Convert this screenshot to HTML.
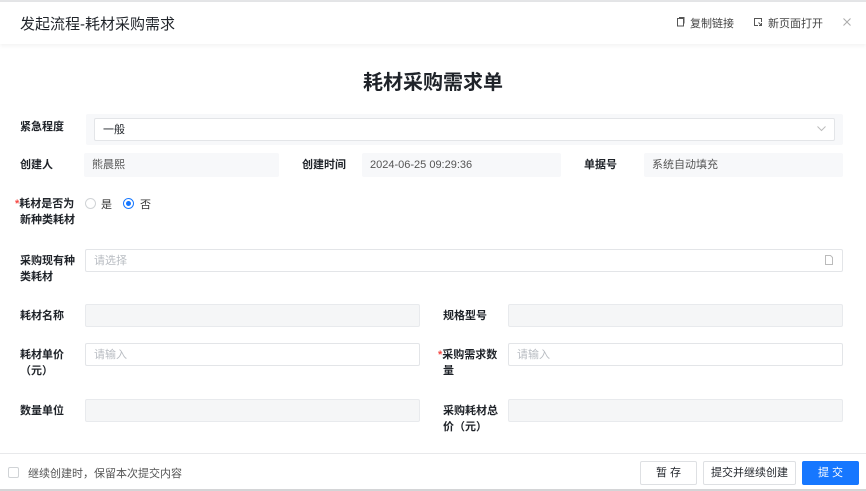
<!DOCTYPE html>
<html><head><meta charset="utf-8"><style>
*{box-sizing:border-box;margin:0;padding:0}
body{width:866px;height:491px;overflow:hidden;background:#fff;font-family:"Liberation Sans","Noto Sans CJK SC",sans-serif;color:#1f2329;position:relative}
.a{position:absolute;white-space:nowrap}
.lbl{font-size:11px;font-weight:bold;color:#1f2329;line-height:16px}
.f{position:absolute;height:23px;border-radius:2px}
.g{background:#f5f6f7;border:1px solid #e8eaed}
.w{background:#fff;border:1px solid #e3e5e8}
.ro{background:#f7f8fa}
.ph{font-size:11px;color:#b8bcc2;line-height:23px;padding-left:8px}
.req{color:#f54a45}
.btn{position:absolute;top:461px;height:24px;font-size:11px;line-height:22px;text-align:center;border:1px solid #dee0e3;border-radius:2px;background:#fff;color:#1f2329}
</style></head><body>
<div class="a" style="left:0;top:0;width:866px;height:2px;background:#e4e5e7"></div>
<div class="a" style="left:0;top:2px;width:866px;height:42px;background:#fff;box-shadow:0 2px 4px rgba(0,0,0,0.05)"></div>
<div class="a" style="left:20px;top:13px;font-size:15px;color:#1f2329">发起流程-耗材采购需求</div>
<svg class="a" style="left:676px;top:17px" width="9" height="10" viewBox="0 0 9 10"><rect x="1.5" y="1.5" width="6" height="7.5" fill="none" stroke="#555" stroke-width="1"/><path d="M3 0.5h5v6" fill="none" stroke="#555"/></svg>
<div class="a" style="left:690px;top:15px;font-size:11px;color:#444">复制链接</div>
<svg class="a" style="left:753px;top:17px" width="10" height="10" viewBox="0 0 10 10"><path d="M8.5 5V1.5h-7v7H5M5.5 5.5l3 3M6 8.5h2.5V6" fill="none" stroke="#555"/></svg>
<div class="a" style="left:768px;top:15px;font-size:11px;color:#444">新页面打开</div>
<svg class="a" style="left:843px;top:18px" width="8" height="8" viewBox="0 0 8 8"><path d="M0.5 0.5l7 7M7.5 0.5l-7 7" stroke="#aaa"/></svg>

<div class="a" style="left:0;width:866px;top:66px;text-align:center;font-size:20px;font-weight:bold;color:#1f2329">耗材采购需求单</div>

<div class="a lbl" style="left:20px;top:119px">紧急程度</div>
<div class="f" style="left:86px;top:114px;width:757px;height:31px;background:#f7f8fa"></div>
<div class="f w" style="left:94px;top:118px;width:741px;height:23px;font-size:11px;line-height:23px;padding-left:8px">一般</div>
<svg class="a" style="left:817px;top:126px" width="9" height="6" viewBox="0 0 9 6"><path d="M0.5 0.5l4 4 4-4" fill="none" stroke="#bbb"/></svg>

<div class="a lbl" style="left:20px;top:157px">创建人</div>
<div class="f ro" style="left:84px;top:153px;width:195px;height:24px;font-size:11px;line-height:25px;padding-left:8px;color:#555">熊晨熙</div>
<div class="a lbl" style="left:302px;top:157px">创建时间</div>
<div class="f ro" style="left:362px;top:153px;width:199px;height:24px;font-size:11px;line-height:25px;padding-left:8px;color:#555">2024-06-25 09:29:36</div>
<div class="a lbl" style="left:584px;top:157px">单据号</div>
<div class="f ro" style="left:644px;top:153px;width:199px;height:24px;font-size:11px;line-height:25px;padding-left:8px;color:#555">系统自动填充</div>

<div class="a lbl" style="left:15px;top:196px"><span class="req">*</span>耗材是否为</div>
<div class="a lbl" style="left:20px;top:212px">新种类耗材</div>
<div class="a" style="left:85px;top:198px;width:11px;height:11px;border:1px solid #d0d3d6;border-radius:50%"></div>
<div class="a" style="left:101px;top:196px;font-size:11px;color:#333">是</div>
<div class="a" style="left:123px;top:198px;width:11px;height:11px;border:1px solid #1677ff;border-radius:50%"><div style="margin:2px;width:5px;height:5px;background:#1677ff;border-radius:50%"></div></div>
<div class="a" style="left:140px;top:196px;font-size:11px;color:#333">否</div>

<div class="a lbl" style="left:20px;top:253px">采购现有种</div>
<div class="a lbl" style="left:20px;top:269px">类耗材</div>
<div class="f w ph" style="left:85px;top:249px;width:758px">请选择</div>
<svg class="a" style="left:825px;top:255px" width="8" height="10" viewBox="0 0 8 10"><path d="M0.5 0.5h5l2 2v7h-7z" fill="none" stroke="#bbb"/></svg>

<div class="a lbl" style="left:20px;top:308px">耗材名称</div>
<div class="f g" style="left:85px;top:304px;width:335px"></div>
<div class="a lbl" style="left:443px;top:308px">规格型号</div>
<div class="f g" style="left:508px;top:304px;width:335px"></div>

<div class="a lbl" style="left:20px;top:347px">耗材单价</div>
<div class="a lbl" style="left:20px;top:363px">（元）</div>
<div class="f w ph" style="left:85px;top:343px;width:335px">请输入</div>
<div class="a lbl" style="left:438px;top:347px"><span class="req">*</span>采购需求数</div>
<div class="a lbl" style="left:443px;top:363px">量</div>
<div class="f w ph" style="left:508px;top:343px;width:335px">请输入</div>

<div class="a lbl" style="left:20px;top:403px">数量单位</div>
<div class="f g" style="left:85px;top:399px;width:335px"></div>
<div class="a lbl" style="left:443px;top:403px">采购耗材总</div>
<div class="a lbl" style="left:443px;top:419px">价（元）</div>
<div class="f g" style="left:508px;top:399px;width:335px"></div>

<div class="a" style="left:0;top:453px;width:866px;height:1px;background:#e8e9eb"></div>
<div class="a" style="left:8px;top:467px;width:11px;height:11px;border:1px solid #d0d3d6;border-radius:2px"></div>
<div class="a" style="left:28px;top:465px;font-size:11px;color:#555">继续创建时，保留本次提交内容</div>
<div class="btn" style="left:640px;width:57px">暂 存</div>
<div class="btn" style="left:703px;width:93px">提交并继续创建</div>
<div class="btn" style="left:802px;width:57px;background:#1677ff;border-color:#1677ff;color:#fff">提 交</div>
<div class="a" style="left:0;top:489px;width:866px;height:2px;background:#d4d5d7"></div>
</body></html>
